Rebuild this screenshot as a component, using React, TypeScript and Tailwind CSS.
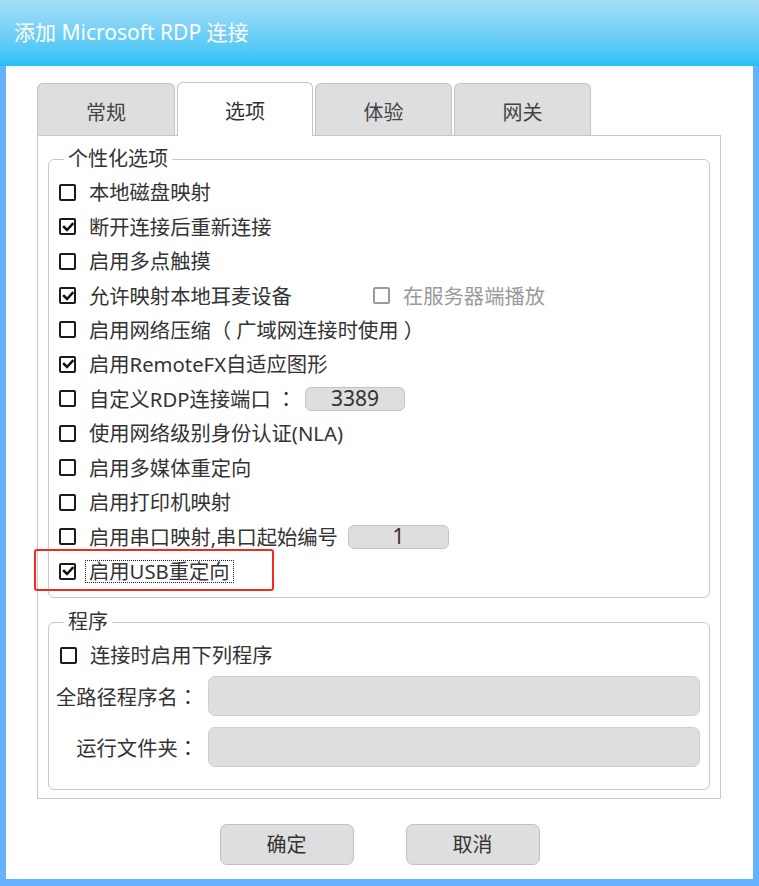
import React from "react";

const FONT = { fontFamily: '"Noto Sans", "Noto Sans CJK SC", sans-serif' };
const TC = { fontFamily: '"Noto Sans CJK TC", "Noto Sans CJK SC", sans-serif' };

function Box({ checked, disabled }: { checked?: boolean; disabled?: boolean }) {
  return (
    <span
      className={
        "flex h-[17px] w-[17px] shrink-0 items-center justify-center rounded-[2px] border-[2.5px] bg-white " +
        (disabled ? "border-[#9a9a9a]" : "border-[#1a1a1a]")
      }
    >
      {checked && (
        <svg width="12" height="12" viewBox="0 0 12 12">
          <polyline points="2,6 5,9 10.5,3" fill="none" stroke="#111" strokeWidth="2.5" strokeLinecap="square" />
        </svg>
      )}
    </span>
  );
}

function Colon() {
  return <span style={TC}>：</span>;
}

function Row({ checked, children }: { checked?: boolean; children: React.ReactNode }) {
  return (
    <div className="flex h-[34.45px] items-center pl-[10px]">
      <Box checked={checked} />
      <div className="ml-[13px] flex items-center">{children}</div>
    </div>
  );
}

function SmallInput({ value, w }: { value: string; w: string }) {
  return (
    <div
      className={
        "flex h-[24px] items-center justify-center rounded-[6px] border border-[#c4c4c4] bg-[#dedede] text-[21px] leading-none text-[#333] " +
        w
      }
    >
      {value}
    </div>
  );
}

export default function App() {
  const tabs = ["常规", "选项", "体验", "网关"];
  return (
    <div className="flex h-[886px] w-[759px] flex-col" style={FONT}>
      <div className="flex h-[66px] shrink-0 items-center bg-linear-to-b from-[#a5def5] to-[#1fc1f6] pl-[14px] text-[21px] text-white">
        添加 Microsoft RDP 连接
      </div>
      <div className="flex flex-1 flex-col border-x-[6px] border-b-[7px] border-[#66b2ff] bg-white pl-[31px] pt-[17px] text-[#333]">
        {/* tabs */}
        <div className="flex h-[52px] items-end gap-[2px]">
          {tabs.map((t, i) =>
            i === 1 ? (
              <div
                key={t}
                className="relative z-10 -mb-px flex h-[54px] w-[136px] items-center justify-center rounded-t-[6px] border-x border-t border-[#c3c3c3] bg-white pt-[4px] text-[20px] text-[#333]"
              >
                {t}
              </div>
            ) : (
              <div
                key={t}
                className={
                  "flex h-[52px] items-center justify-center rounded-t-[6px] border-x border-t border-[#c3c3c3] bg-[#dedede] pt-[6px] text-[20px] text-[#444] " +
                  (i === 0 ? "w-[138px]" : "w-[137px]")
                }
              >
                {t}
              </div>
            )
          )}
        </div>
        {/* panel */}
        <div className="flex h-[664px] w-[684px] flex-col border border-[#c8c8c8] px-[10px] pt-[9px]">
          <fieldset className="h-[453px] rounded-[6px] border border-[#c8c8c8]">
            <legend className="ml-[15px] px-[4px] text-[20px] leading-[28px] text-[#333]">个性化选项</legend>
            <div className="pt-[2px] text-[20.3px] leading-[28px]">
              <Row>本地磁盘映射</Row>
              <Row checked>断开连接后重新连接</Row>
              <Row>启用多点触摸</Row>
              <div className="flex h-[34.45px] items-center pl-[10px]">
                <Box checked />
                <span className="ml-[13px] w-[284px]">允许映射本地耳麦设备</span>
                <Box disabled />
                <span className="ml-[13px] text-[#9a9a9a]">在服务器端播放</span>
              </div>
              <Row>启用网络压缩（ 广域网连接时使用 ）</Row>
              <Row checked>启用RemoteFX自适应图形</Row>
              <Row>
                <span className="w-[216px]">
                  自定义RDP连接端口 <Colon />
                </span>
                <SmallInput value="3389" w="w-[100px]" />
              </Row>
              <Row>使用网络级别身份认证(NLA)</Row>
              <Row>启用多媒体重定向</Row>
              <Row>启用打印机映射</Row>
              <Row>
                <span className="w-[259px]">启用串口映射,串口起始编号</span>
                <SmallInput value="1" w="w-[101px]" />
              </Row>
              <div className="relative flex h-[34.45px] items-center pl-[10px]">
                <div className="absolute left-[-15px] top-[-5px] h-[42px] w-[240px] rounded-[3px] border-2 border-[#ee2a22]" />
                <Box checked />
                <span className="ml-[9px] border border-dotted border-[#222] px-[3px] leading-[21px]">启用USB重定向</span>
              </div>
            </div>
          </fieldset>
          <fieldset className="mt-[10px] h-[182px] rounded-[6px] border border-[#c8c8c8]">
            <legend className="ml-[15px] px-[4px] text-[20px] leading-[28px] text-[#333]">程序</legend>
            <div className="text-[20.3px] leading-[28px]">
              <div className="flex h-[34px] items-center pl-[11px] pt-[4px]">
                <Box />
                <span className="ml-[13px]">连接时启用下列程序</span>
              </div>
              <div className="mt-[6px] flex flex-col gap-[11px] pr-[9px]">
                <div className="flex items-center">
                  <span className="w-[149px] text-right">
                    全路径程序名
                    <Colon />
                  </span>
                  <div className="ml-[10px] h-[40px] flex-1 rounded-[7px] border border-[#cfcfcf] bg-[#dedede]" />
                </div>
                <div className="flex items-center">
                  <span className="w-[149px] text-right">
                    运行文件夹
                    <Colon />
                  </span>
                  <div className="ml-[10px] h-[40px] flex-1 rounded-[7px] border border-[#cfcfcf] bg-[#dedede]" />
                </div>
              </div>
            </div>
          </fieldset>
        </div>
        {/* buttons */}
        <div className="-ml-[31px] mt-[25px] flex justify-center gap-[52px]">
          <button className="h-[41px] w-[134px] rounded-[7px] border border-[#c0c0c0] bg-[#dedede] text-[20px] text-[#333]">
            确定
          </button>
          <button className="h-[41px] w-[134px] rounded-[7px] border border-[#c0c0c0] bg-[#dedede] text-[20px] text-[#333]">
            取消
          </button>
        </div>
      </div>
    </div>
  );
}
